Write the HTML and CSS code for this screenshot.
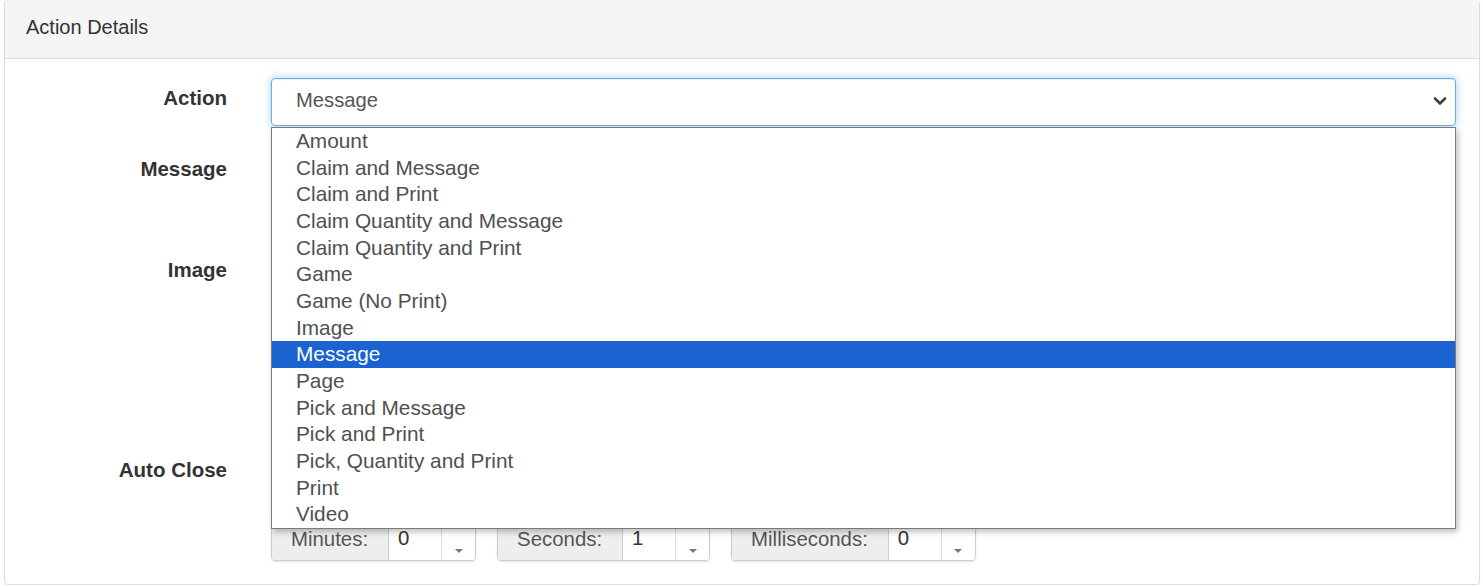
FILE: index.html
```html
<!DOCTYPE html>
<html lang="en">
<head>
    <meta charset="UTF-8">
    <title>Action Details</title>
    <link rel="stylesheet" href="styles.css">
</head>
<body>
    <div class="panel">
        <div class="panel-heading">Action Details</div>
        <div class="panel-body">
            <div class="form-row row-action">
                <label class="form-label">Action</label>
                <div class="control">
                    <div class="select-box">
                        <span class="select-value">Message</span>
                        <svg class="chevron" width="14" height="10" viewBox="0 0 14 10">
                            <polyline points="2,2.5 7,7.5 12,2.5" fill="none" stroke="#444" stroke-width="2.6" stroke-linecap="round" stroke-linejoin="round"/>
                        </svg>
                    </div>
                    <ul class="option-list">
                        <li>Amount</li>
                        <li>Claim and Message</li>
                        <li>Claim and Print</li>
                        <li>Claim Quantity and Message</li>
                        <li>Claim Quantity and Print</li>
                        <li>Game</li>
                        <li>Game (No Print)</li>
                        <li>Image</li>
                        <li class="selected">Message</li>
                        <li>Page</li>
                        <li>Pick and Message</li>
                        <li>Pick and Print</li>
                        <li>Pick, Quantity and Print</li>
                        <li>Print</li>
                        <li>Video</li>
                    </ul>
                </div>
            </div>
            <div class="form-row row-message">
                <label class="form-label">Message</label>
                <div class="control"></div>
            </div>
            <div class="form-row row-image">
                <label class="form-label">Image</label>
                <div class="control"></div>
            </div>
            <div class="form-row row-close">
                <label class="form-label">Auto Close</label>
                <div class="control">
                    <div class="close-check"></div>
                    <div class="time-groups">
                        <div class="time-group">
                            <span class="addon">Minutes:</span>
                            <span class="time-input">0</span>
                            <span class="spin"><span class="up"></span><span class="down"></span></span>
                        </div>
                        <div class="time-group">
                            <span class="addon">Seconds:</span>
                            <span class="time-input">1</span>
                            <span class="spin"><span class="up"></span><span class="down"></span></span>
                        </div>
                        <div class="time-group">
                            <span class="addon">Milliseconds:</span>
                            <span class="time-input">0</span>
                            <span class="spin"><span class="up"></span><span class="down"></span></span>
                        </div>
                    </div>
                </div>
            </div>
        </div>
    </div>
</body>
</html>
```

FILE: styles.css
```css
body {
    margin: 0;
    background: #fff;
    font-family: "Liberation Sans", Arial, sans-serif;
    color: #333;
}

.panel {
    margin: -1px 3px 0 4px;
    border: 1px solid #ddd;
    border-radius: 4px;
    box-shadow: 0 1px 2px rgba(0, 0, 0, 0.05);
}

.panel-heading {
    background: #f5f5f5;
    border-bottom: 1px solid #ddd;
    padding: 15px 21px 19px;
    font-size: 20px;
    line-height: 24px;
    color: #333;
}

.panel-body {
    padding: 19px 23px 23px 0;
}

.form-row {
    display: grid;
    grid-template-columns: 222px 1fr;
    column-gap: 44px;
}

.row-action { height: 71px; }
.row-message { height: 101px; }
.row-image { height: 200px; }

.form-label {
    text-align: right;
    font-weight: bold;
    font-size: 20.5px;
    line-height: 24px;
    padding-top: 8px;
    color: #333;
}

.control {
    position: relative;
}

.select-box {
    border: 1px solid #66afe9;
    border-radius: 4px;
    box-shadow: inset 0 1px 1px rgba(0, 0, 0, 0.075), 0 0 8px rgba(102, 175, 233, 0.6);
    display: flex;
    align-items: center;
    justify-content: space-between;
    padding: 0 8px 4px 24px;
    height: 42px;
    background: #fff;
}

.select-value {
    font-size: 20.2px;
    color: #555;
}

.chevron {
    margin-top: 2px;
}

.option-list {
    position: absolute;
    top: 49px;
    left: 0;
    right: 0;
    margin: 0;
    padding: 0;
    list-style: none;
    background: #fff;
    border: 1px solid #7a7a7a;
    box-shadow: 2px 3px 6px rgba(0, 0, 0, 0.25);
    z-index: 5;
}

.option-list li {
    height: 26.67px;
    line-height: 26.67px;
    padding-left: 24px;
    font-size: 20.8px;
    color: #505050;
    white-space: nowrap;
}

.option-list li.selected {
    background: #1a63d1;
    color: #fff;
}

.close-check {
    height: 63px;
}

.time-groups {
    display: flex;
    gap: 21px;
}

.time-group {
    display: flex;
    height: 46px;
    border: 1px solid #ccc;
    border-radius: 4px;
    box-shadow: 0 1px 2px rgba(0, 0, 0, 0.1);
    font-size: 20.4px;
    color: #555;
    overflow: hidden;
}

.addon {
    background: #eee;
    padding: 4px 20px 0 19px;
    line-height: 42px;
    border-right: 1px solid #ccc;
}

.time-input {
    width: 43px;
    padding: 4px 0 0 9px;
    line-height: 40px;
    background: #fff;
    color: #333;
}

.spin {
    width: 33px;
    border-left: 1px solid #ddd;
    background: #fff;
    display: flex;
    flex-direction: column;
}

.spin span {
    flex: 1;
    display: flex;
    justify-content: center;
    align-items: center;
}

.spin .up::after {
    content: "";
    border-left: 4px solid transparent;
    border-right: 4px solid transparent;
    border-bottom: 4px solid #777;
}

.spin .down::after {
    content: "";
    margin-top: 4px;
    border-left: 4px solid transparent;
    border-right: 4px solid transparent;
    border-top: 4px solid #777;
}
```
